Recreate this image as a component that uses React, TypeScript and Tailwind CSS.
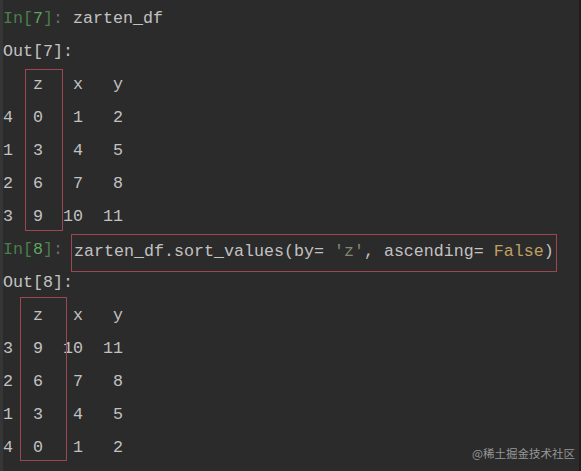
import React from 'react';

const mono = { fontFamily: '"Liberation Mono", "DejaVu Sans Mono", monospace' };

interface TableProps {
  header: string[];
  rows: string[][];
  variant: 'first' | 'second';
}

const Prompt: React.FC<{ kind: 'In' | 'Out'; n: number }> = ({ kind, n }) =>
  kind === 'In' ? (
    <span>
      <span className="text-[#4a7f4a]">In[</span>
      <span className="text-[#5fa55f]">{n}</span>
      <span className="text-[#4a7f4a]">]</span>
      <span className="text-[#6f6f6f]">:</span>
    </span>
  ) : (
    <span className="text-[#c2c2c2]">Out[{n}]:</span>
  );

const DataTable: React.FC<TableProps> = ({ header, rows, variant }) => {
  const first = variant === 'first';
  const all = [['', ...header], ...rows];
  return (
    <div className="flex">
      {/* index */}
      <div className={`flex flex-col ${first ? 'w-[22px]' : 'w-[17px]'}`}>
        {all.map((r, i) => (
          <div key={i} className="h-[33px]">{r[0]}</div>
        ))}
      </div>
      {/* highlighted z column */}
      <div className={`relative flex flex-col ${first ? 'w-[38px] pl-[8px]' : 'w-[47px] pl-[13px]'}`}>
        {all.map((r, i) => (
          <div key={i} className="h-[33px]">{r[1]}</div>
        ))}
        <div
          className={`absolute inset-x-0 border border-[#9c4652] ${
            first ? 'top-[1px] bottom-[2px]' : 'top-[-2px] bottom-[3px]'
          }`}
        />
      </div>
      <div className={`flex flex-col ${first ? 'w-[20px]' : 'w-[16px]'}`}>
        {all.map((r, i) => (
          <div key={i} className="h-[33px] flex justify-end whitespace-nowrap">{r[2]}</div>
        ))}
      </div>
      <div className="flex flex-col w-[40px]">
        {all.map((r, i) => (
          <div key={i} className="h-[33px] flex justify-end whitespace-nowrap">{r[3]}</div>
        ))}
      </div>
    </div>
  );
};

export default function App() {
  return (
    <div className="relative flex h-[471px] w-[581px] overflow-hidden bg-[#2b2b2b]">
      <div className="w-[3px] bg-[#363636]" />
      <div
        className="flex-1 pt-[2px] text-[16.67px] leading-[33px] text-[#c2c2c2] whitespace-pre"
        style={mono}
      >
        <div className="h-[33px]">
          <Prompt kind="In" n={7} /> zarten_df
        </div>
        <div className="h-[33px]">
          <Prompt kind="Out" n={7} />
        </div>
        <DataTable
          variant="first"
          header={['z', 'x', 'y']}
          rows={[
            ['4', '0', '1', '2'],
            ['1', '3', '4', '5'],
            ['2', '6', '7', '8'],
            ['3', '9', '10', '11'],
          ]}
        />
        <div className="flex h-[33px] items-start">
          <span className="w-[68px]">
            <Prompt kind="In" n={8} />
          </span>
          <span className="mt-[0.5px] h-[38px] border border-[#9c4652] pl-[2px] pr-[2px]">
            zarten_df.sort_values(by= <span className="text-[#7d8a6e]">'z'</span>, ascending={' '}
            <span className="text-[#bfa064]">False</span>)
          </span>
        </div>
        <div className="h-[33px]">
          <Prompt kind="Out" n={8} />
        </div>
        <DataTable
          variant="second"
          header={['z', 'x', 'y']}
          rows={[
            ['3', '9', '10', '11'],
            ['2', '6', '7', '8'],
            ['1', '3', '4', '5'],
            ['4', '0', '1', '2'],
          ]}
        />
      </div>
      <div className="w-[2px] bg-[#1e1e1e]" />
      <div
        className="absolute bottom-[9px] right-[6px] text-[11.5px] text-[#979797]"
        style={{ fontFamily: '"Noto Sans CJK SC", "Noto Sans", sans-serif' }}
      >
        @稀土掘金技术社区
      </div>
    </div>
  );
}
